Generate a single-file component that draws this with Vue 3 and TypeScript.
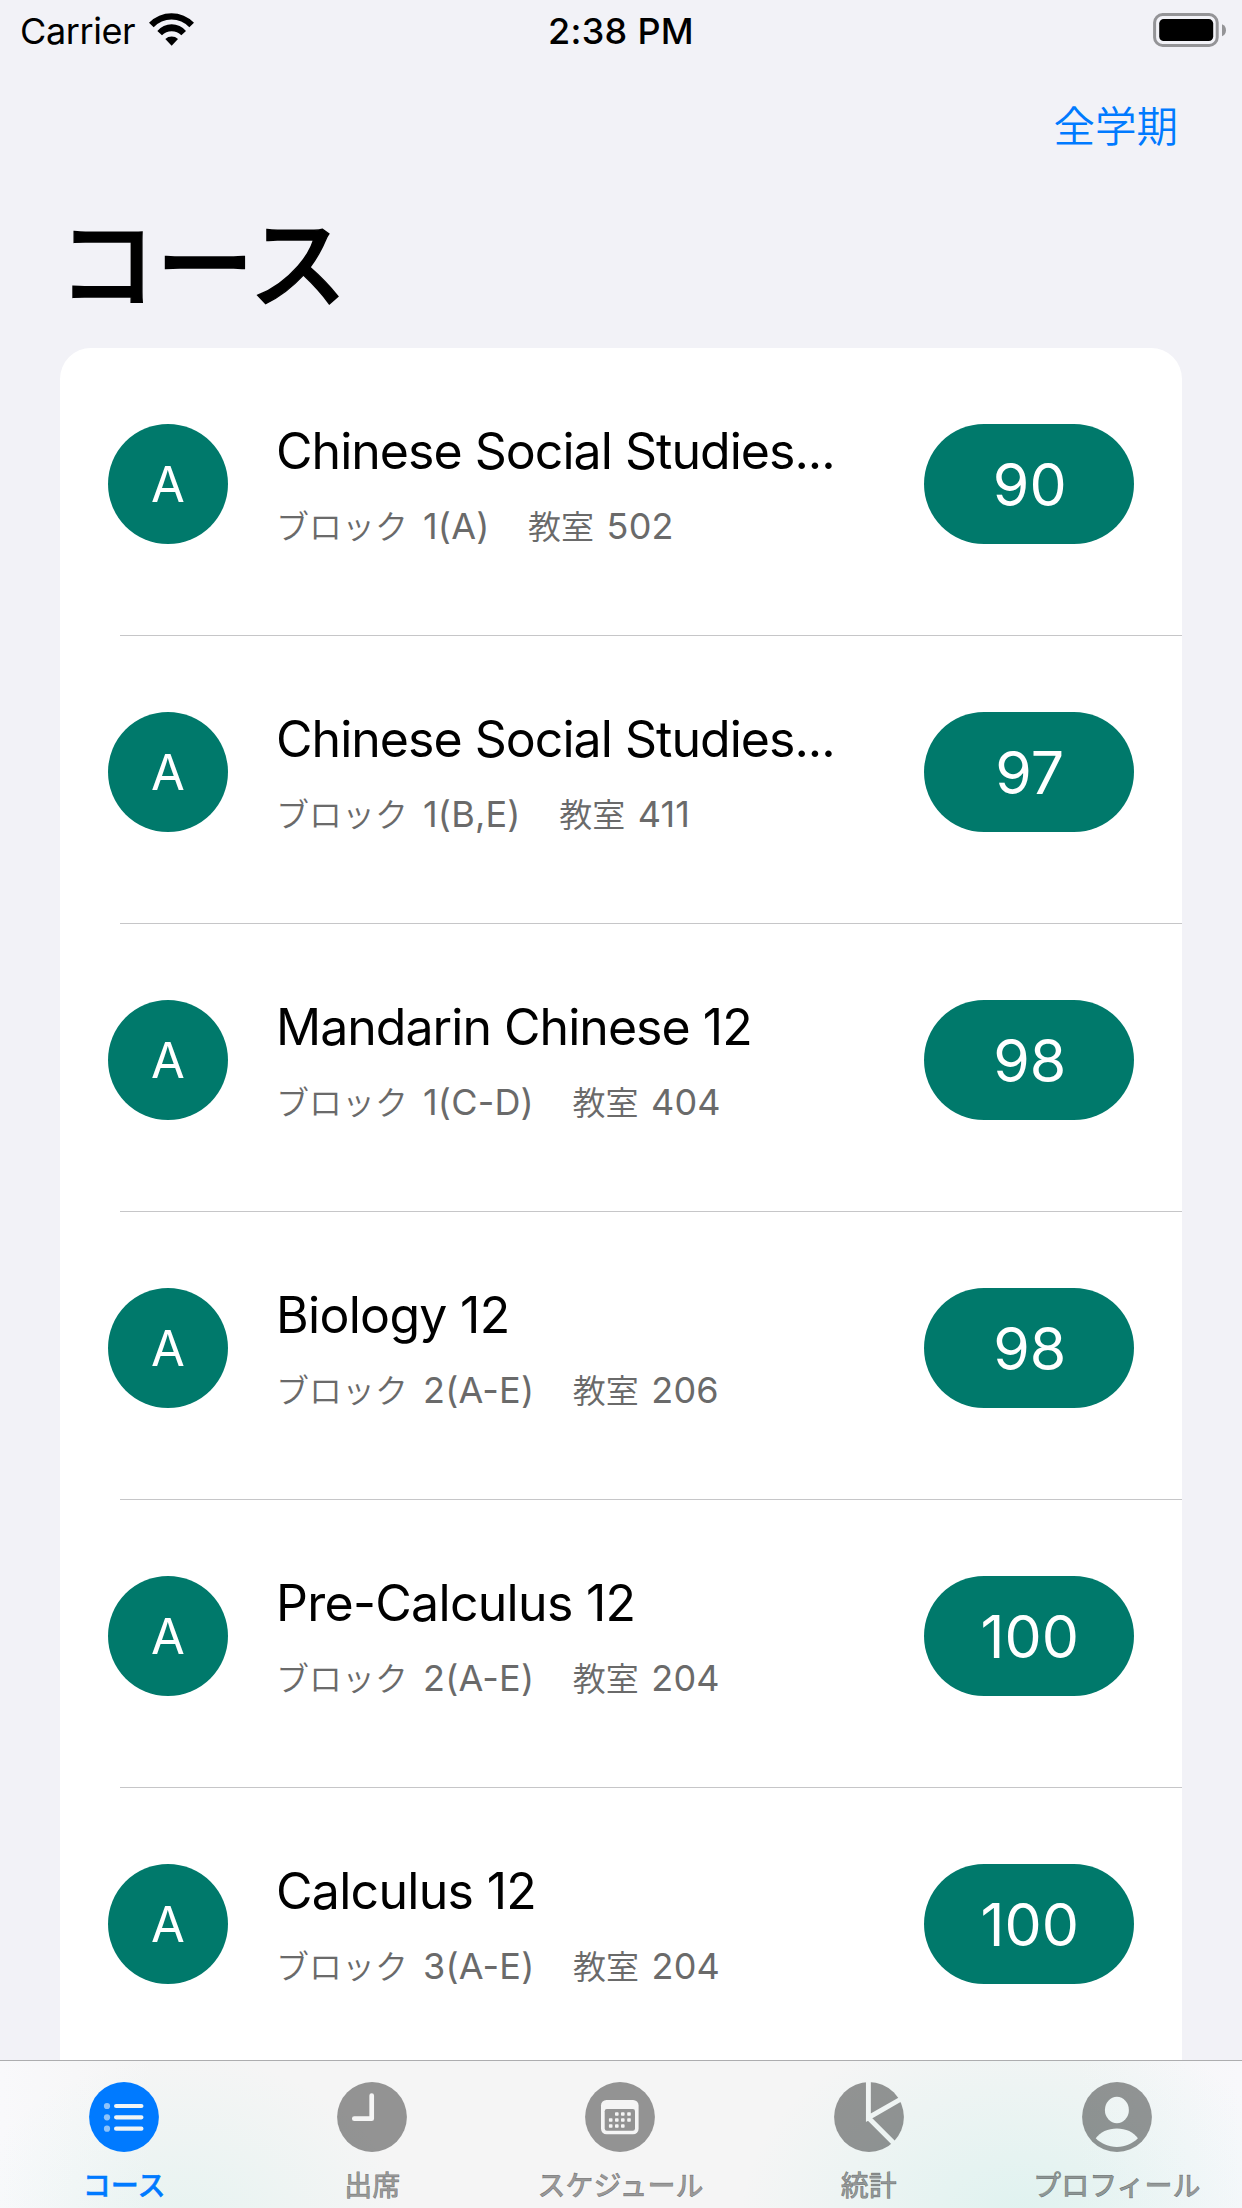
<script setup lang="ts">
interface Course {
  title: string
  block: string
  room: string
  grade: string
  score: number
}

interface Tab {
  id: 'courses' | 'attendance' | 'schedule' | 'stats' | 'profile'
  label: string
}

const courses: Course[] = [
  { title: 'Chinese Social Studies...', block: '1(A)', room: '502', grade: 'A', score: 90 },
  { title: 'Chinese Social Studies...', block: '1(B,E)', room: '411', grade: 'A', score: 97 },
  { title: 'Mandarin Chinese 12', block: '1(C-D)', room: '404', grade: 'A', score: 98 },
  { title: 'Biology 12', block: '2(A-E)', room: '206', grade: 'A', score: 98 },
  { title: 'Pre-Calculus 12', block: '2(A-E)', room: '204', grade: 'A', score: 100 },
  { title: 'Calculus 12', block: '3(A-E)', room: '204', grade: 'A', score: 100 },
]

const tabs: Tab[] = [
  { id: 'courses', label: 'コース' },
  { id: 'attendance', label: '出席' },
  { id: 'schedule', label: 'スケジュール' },
  { id: 'stats', label: '統計' },
  { id: 'profile', label: 'プロフィール' },
]

const activeTab: Tab['id'] = 'courses'

// Day cells of the calendar icon: [x, y] centres
const days: [number, number][] = [
  [31.8, 32], [37.8, 32], [44, 32],
  [25.7, 38], [31.8, 38], [37.8, 38], [44, 38],
  [25.7, 44], [31.8, 44], [37.8, 44],
]
</script>

<template>
  <div class="screen">
    <header class="status">
      <div class="status-left">
        <span class="carrier">Carrier</span>
        <svg class="wifi" viewBox="448 39 135 98" width="45" height="32.7">
          <path d="M448 68A94.2 94.2 0 0 1 583 68L569 82A73 73 0 0 0 462 82Z" />
          <path d="M473 93A56 56 0 0 1 559 93L545 106A41 41 0 0 0 487 106Z" />
          <path d="M497 117A28 28 0 0 1 535 117L516 137Z" />
        </svg>
      </div>
      <span class="time">2:38 PM</span>
      <div class="status-right">
        <svg class="battery" viewBox="0 0 73 34" width="73" height="34">
          <rect x="1.6" y="1.6" width="62.6" height="30.8" rx="8" fill="none" stroke="#949497" stroke-width="3" />
          <rect x="6.2" y="6.1" width="54" height="22" rx="4.5" />
          <path d="M69 11.2c2.600 1 4 3.200 4 6s-1.400 5-4 6z" fill="#949497" />
        </svg>
      </div>
    </header>

    <div class="nav"><a class="term">全学期</a></div>
    <h1 class="heading">コース</h1>

    <main class="card">
      <section v-for="(c, i) in courses" :key="i" class="row">
        <div class="grade">{{ c.grade }}</div>
        <div class="info">
          <div class="title" :class="{ tight: c.title.length > 16 }">{{ c.title }}</div>
          <div class="meta">
            <span class="jp">ブロック</span><span class="num">{{ c.block }}</span>
            <span class="jp room">教室</span><span class="num room-num">{{ c.room }}</span>
          </div>
        </div>
        <div class="score">{{ c.score }}</div>
      </section>
    </main>

    <nav class="tabbar">
      <div v-for="t in tabs" :key="t.id" class="tab" :class="{ active: t.id === activeTab }">
        <svg class="icon" viewBox="0 0 70 70" width="70" height="70">
          <mask :id="'cut-' + t.id" maskUnits="userSpaceOnUse" x="0" y="0" width="70" height="70">
            <rect width="70" height="70" fill="#fff" />
            <g v-if="t.id === 'courses'" stroke="#000" stroke-width="4.200" stroke-linecap="round">
              <path d="M27.100 24H52.400M27.100 35.300H52.400M27.100 46.700H52.400" />
              <g stroke="none">
                <circle cx="18" cy="24" r="3.100" />
                <circle cx="18" cy="35.300" r="3.100" />
                <circle cx="18" cy="46.700" r="3.100" />
              </g>
            </g>
            <path
              v-else-if="t.id === 'attendance'"
              d="M34.700 13.600V36.700H17.300"
              fill="none"
              stroke="#000"
              stroke-width="4.700"
              stroke-linecap="round"
              stroke-linejoin="round"
            />
            <g v-else-if="t.id === 'schedule'">
              <rect x="16" y="18" width="37.600" height="34.300" rx="5.500" fill="#000" />
              <rect x="19.700" y="27" width="30.300" height="21.700" rx="2.200" fill="#fff" />
              <rect v-for="([x, y], k) in days" :key="k" :x="x - 1.8" :y="y - 1.8" width="3.600" height="3.600" rx=".8" fill="#000" />
            </g>
            <path
              v-else-if="t.id === 'stats'"
              d="M34.400-5V35.700L70 15.300M34.400 35.700L64.400 65.700"
              fill="none"
              stroke="#000"
              stroke-width="4.900"
            />
            <g v-else fill="#000">
              <ellipse cx="34.900" cy="28" rx="12" ry="13.200" />
              <path d="M13.700 56.300C18 50 26 46.400 34.900 46.400S51.700 50 55.900 56.300C50.500 61.600 43.500 65 34.900 65S19 61.600 13.700 56.300Z" />
            </g>
          </mask>
          <circle cx="35" cy="35" r="34.900" :mask="`url(#cut-${t.id})`" />
        </svg>
        <span class="label">{{ t.label }}</span>
      </div>
    </nav>
  </div>
</template>

<style>
body {
  background: #f2f2f7;
}
</style>

<style scoped>
.screen {
  width: 1242px;
  height: 2208px;
  display: flex;
  flex-direction: column;
  overflow: hidden;
  background: #f2f2f7;
  color: #000;
  font-family: Inter, 'Noto Sans CJK JP', sans-serif;
}

.status {
  flex: none;
  display: grid;
  grid-template-columns: 1fr auto 1fr;
  height: 60px;
  font-size: 36px;
  line-height: 63px;
}
.status-left {
  display: flex;
  align-items: flex-start;
  padding-left: 20px;
}
.carrier {
  letter-spacing: -0.4px;
}
.wifi {
  margin: 13px 0 0 13.500px;
}
.time {
  font-weight: 550;
  letter-spacing: 0.3px;
}
.status-right {
  display: flex;
  justify-content: flex-end;
  padding: 13px 16px 0 0;
}
.battery {
  display: block;
}

.nav {
  flex: none;
  height: 140px;
  box-sizing: border-box;
  padding: 34px 64px 0 0;
  text-align: right;
}
.term {
  display: block;
  font: 350 41.5px/60px 'Noto Sans CJK JP', sans-serif;
  color: #007aff;
}
.heading {
  flex: none;
  margin: 0;
  padding: 1px 0 0 58px;
  height: 147px;
  font: 500 98px/112px 'Noto Sans CJK JP', sans-serif;
  -webkit-text-stroke: 1.4px #000;
}

.card {
  flex: 1;
  min-height: 0;
  margin: 0 60px;
  overflow: hidden;
  background: #fff;
  border-radius: 31px 31px 0 0;
}
.row {
  position: relative;
  display: flex;
  align-items: flex-start;
  box-sizing: border-box;
  height: 288px;
  padding: 76px 48px 0;
}
.row::after {
  content: '';
  position: absolute;
  left: 60px;
  right: 0;
  bottom: 0;
  height: 1px;
  background: #c6c6c8;
}
.grade,
.score {
  flex: none;
  box-sizing: border-box;
  height: 120px;
  border-radius: 60px;
  background: #00796b;
  color: #fff;
  line-height: 121px;
  text-align: center;
}
.grade {
  width: 120px;
  font-size: 49px;
}
.score {
  width: 210px;
  padding-left: 1.500px;
  font-size: 59px;
}
.info {
  flex: 1;
  min-width: 0;
  padding-left: 48px;
  margin-top: -3px;
  white-space: nowrap;
}
.title {
  height: 82px;
  font-size: 50px;
  line-height: 60px;
  letter-spacing: -0.7px;
}
.title.tight {
  letter-spacing: -0.97px;
}
.meta {
  display: flex;
  align-items: baseline;
  line-height: 44px;
  color: #6a6a6a;
}
.jp {
  font: 350 33px/44px 'Noto Sans CJK JP', sans-serif;
}
.num {
  margin-left: 15px;
  font-size: 36px;
  letter-spacing: 0.2px;
}
.room {
  margin-left: 38.500px;
}
.room-num {
  margin-left: 12.500px;
}

.tabbar {
  flex: none;
  display: grid;
  grid-template-columns: repeat(5, 1fr);
  box-sizing: border-box;
  height: 148px;
  padding-right: 1px;
  border-top: 1px solid #adadaf;
  background:
    radial-gradient(ellipse 280px 200px at 1020px 155px, rgba(130, 230, 215, 0.19), rgba(130, 230, 215, 0) 100%),
    radial-gradient(ellipse 220px 170px at 185px 165px, rgba(130, 230, 210, 0.12), rgba(130, 230, 210, 0) 100%),
    linear-gradient(90deg, #f9f9fb 0, #f5f5f5 150px, #f5f5f5 1080px, #f8f8fb 1242px);
}
.tab {
  display: flex;
  flex-direction: column;
  align-items: center;
  padding-top: 21px;
  color: rgba(0, 0, 0, 0.4);
}
.tab.active {
  color: #007aff;
}
.icon {
  display: block;
  fill: currentColor;
}
.label {
  margin-top: 12px;
  font: 500 28px/40px 'Noto Sans CJK JP', sans-serif;
  -webkit-text-stroke: 0.5px currentColor;
  white-space: nowrap;
}
</style>
